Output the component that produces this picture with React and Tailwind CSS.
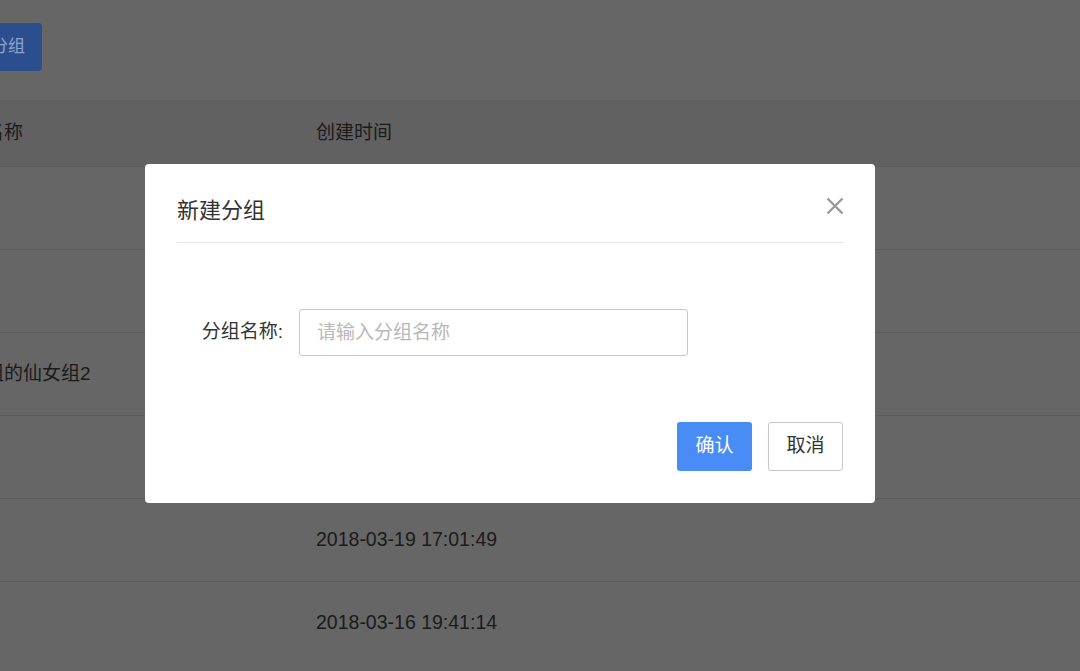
import React from "react";

const rows = [
  { name: "", time: "" },
  { name: "", time: "" },
  { name: "我们组的仙女组2", time: "" },
  { name: "", time: "" },
  { name: "", time: "2018-03-19 17:01:49" },
  { name: "", time: "2018-03-16 19:41:14" },
];

const App = () => {
  return (
    <div className="relative w-[1080px] h-[671px] overflow-hidden bg-[#666666] font-['Liberation_Sans','Noto_Sans_CJK_SC',sans-serif] text-[#1b1b1b]">
      {/* dimmed page below the dialog */}
      <div className="-ml-[74px] w-[1300px] pt-[23px]">
        <button className="ml-[14px] h-12 w-[102px] rounded bg-[#2b4e8e] text-[17px] text-[#8ea6cc]">
          新建分组
        </button>

        <div className="mt-[29px]">
          <div className="grid h-[66px] grid-cols-[390px_1fr] items-center bg-[#616161] text-[19px]">
            <div className="pl-[21px]">分组名称</div>
            <div>创建时间</div>
          </div>
          {rows.map((row, i) => (
            <div
              key={i}
              className="grid h-[83px] grid-cols-[390px_1fr] items-center border-t border-[#5b5b5b] text-[19px]"
            >
              <div className="pl-[21px]">{row.name}</div>
              <div className="text-[19.5px]">{row.time}</div>
            </div>
          ))}
        </div>
      </div>

      {/* dialog */}
      <div className="absolute left-[145px] top-[164px] flex h-[339px] w-[730px] flex-col rounded bg-white px-8 pb-8">
        <div className="flex items-start justify-between border-b border-[#e4e4e4] pt-[31px] pb-[15px]">
          <h3 className="text-[22px] leading-[32px] text-[#333]">新建分组</h3>
          <button className="-mr-[2px] mt-[1px] text-[#999]">
            <svg width="20" height="20" viewBox="0 0 20 20" fill="none" stroke="currentColor" strokeWidth="2.4">
              <path d="M2.5 2.5 L17.5 17.5 M17.5 2.5 L2.5 17.5" />
            </svg>
          </button>
        </div>

        <div className="mt-[66px] flex items-center">
          <label className="w-[106px] text-right text-[19px] text-[#333]">分组名称:</label>
          <input
            className="ml-4 h-[47px] w-[389px] rounded-[3px] border border-[#c8c8c8] px-[17px] text-[19px] outline-none placeholder:text-[#b8b8b8]"
            placeholder="请输入分组名称"
          />
        </div>

        <div className="mt-auto flex justify-end gap-4">
          <button className="h-[49px] w-[75px] rounded-[3px] bg-[#4a8cf6] text-[19px] text-white">确认</button>
          <button className="h-[49px] w-[75px] rounded-[3px] border border-[#c8c8c8] bg-white text-[19px] text-[#333]">取消</button>
        </div>
      </div>
    </div>
  );
};

export default App;
